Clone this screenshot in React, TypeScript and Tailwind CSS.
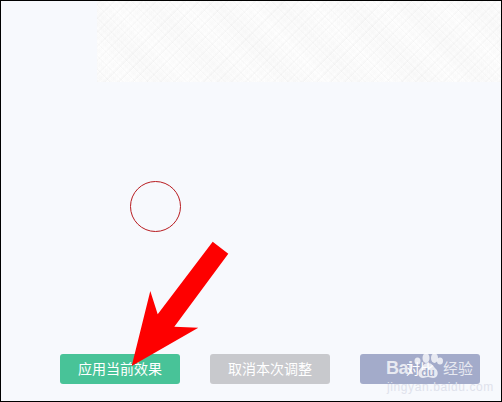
const FONT = "font-['Liberation_Sans','Noto_Sans_CJK_SC',sans-serif]";

function Arrow() {
  return (
    <svg className="absolute left-0 top-0" width="502" height="402" viewBox="0 0 502 402">
      <polygon
        fill="#fe0000"
        points="130.7,365 149.3,290 156.7,313.3 211.7,240.7 227.3,252.7 173.3,325.7 197.3,326.7"
      />
    </svg>
  );
}

function Watermark() {
  return (
    <div className="absolute left-[385px] top-[346px] w-[92px] flex flex-col text-white/75">
      <div className="flex items-end h-[31px]">
        <span className="text-[18px] leading-[20px] font-bold w-[25px] tracking-[-0.5px]">Bai</span>
        <svg width="32" height="31" viewBox="0 0 32 31" fill="currentColor">
          <ellipse cx="15" cy="11" rx="3.5" ry="5" />
          <ellipse cx="23.5" cy="11" rx="3.5" ry="5" />
          <ellipse cx="6.5" cy="14" rx="3" ry="3.5" />
          <ellipse cx="29" cy="14" rx="3" ry="3.5" />
          <path d="M17 16c4 0 5 3 8 6 3 3 2 9-3 9-2 0-3-1-5-1s-3 1-5 1c-5 0-6-6-3-9 3-3 4-6 8-6z" />
          <text x="17" y="29" textAnchor="middle" fontSize="11" fontWeight="700" fill="#a3abca">du</text>
        </svg>
        <span className="text-[15px] leading-[18px]">经验</span>
      </div>
      <span className="text-[12px] leading-[12px] mt-[3px] ml-[1px] tracking-[0.6px] whitespace-nowrap text-[#dfe2ec]">jingyan.baidu.com</span>
    </div>
  );
}

export default function App() {
  return (
    <div className={`relative w-[502px] h-[402px] overflow-hidden flex flex-col bg-[#f7f9fd] border border-black ${FONT}`}>
      <div className="h-[81px] ml-[96px] bg-white bg-[repeating-linear-gradient(45deg,#f9f9f9_0px,#ffffff_2px,#fcfcfc_5px,#ffffff_9px),repeating-linear-gradient(-45deg,#f8f8f8_0px,#ffffff_3px,#fcfcfc_6px,#ffffff_10px),repeating-linear-gradient(45deg,#fcfcfc_0px,#ffffff_23px,#fcfcfc_46px)] bg-blend-multiply" />
      <div className="flex-1 flex items-end gap-[30px] pl-[59px] pb-[17px]">
        <button className="w-[120px] h-[30px] rounded-[3px] bg-[#48c398] text-white text-sm">应用当前效果</button>
        <button className="w-[120px] h-[30px] rounded-[3px] bg-[#c8c9cd] text-white text-sm">取消本次调整</button>
        <button className="w-[120px] h-[30px] rounded-[3px] bg-[#a3abca] text-white text-sm">对比</button>
      </div>
      <div className="absolute left-[129px] top-[180px] w-[51px] h-[51px] rounded-full border border-[#b81c20]" />
      <Arrow />
      <Watermark />
    </div>
  );
}
